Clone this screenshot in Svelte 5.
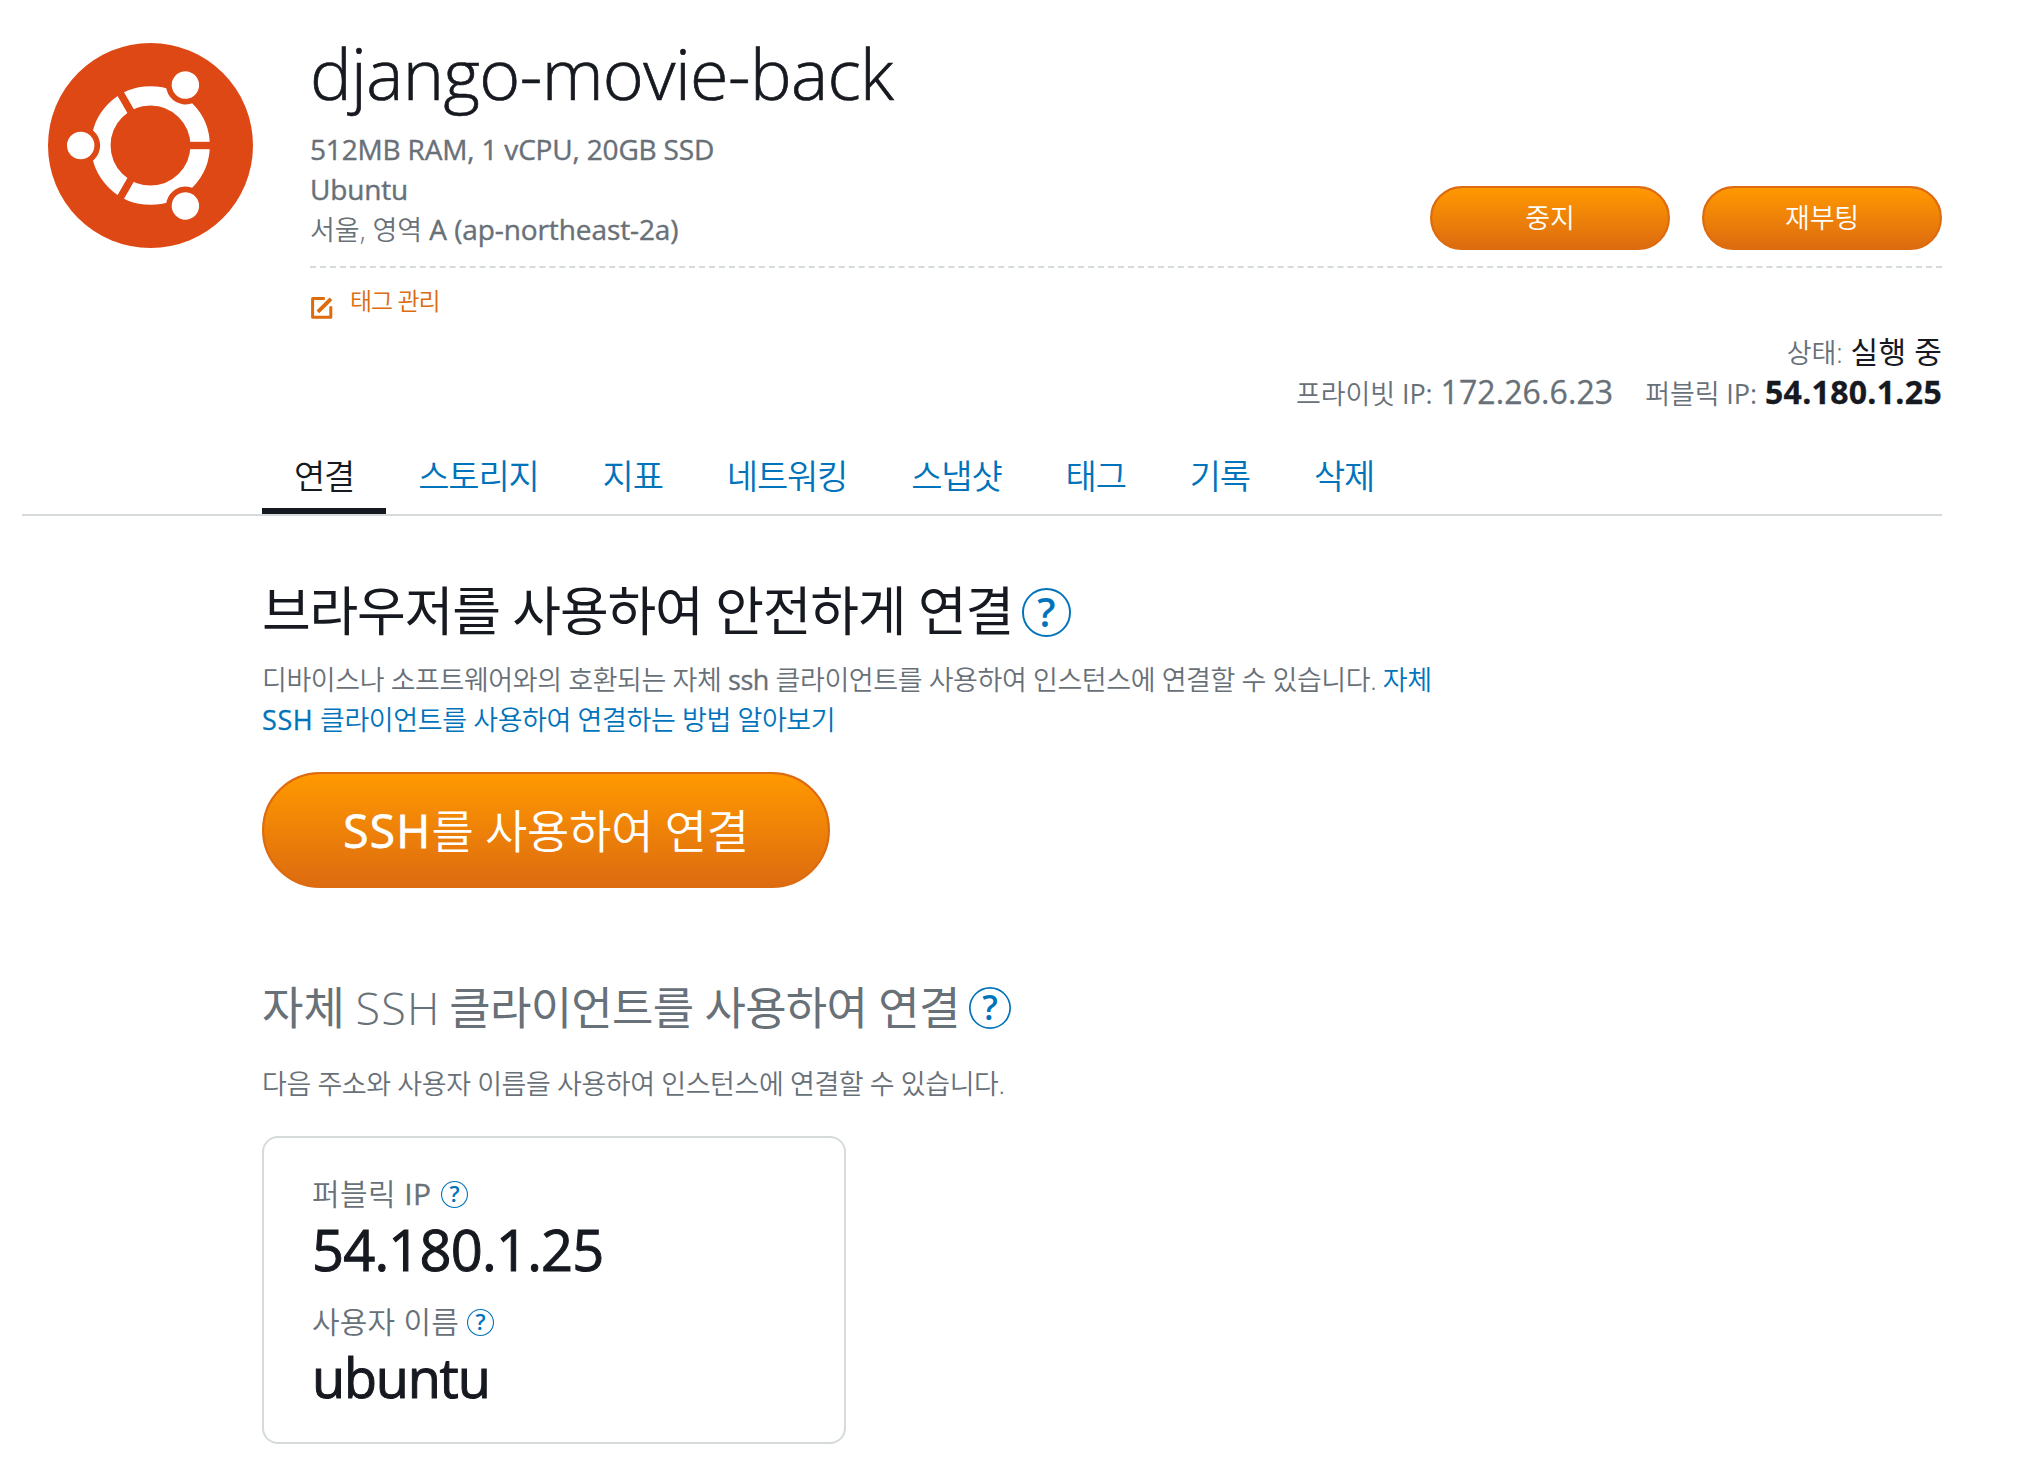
<script>
  const tabs = ['연결', '스토리지', '지표', '네트워킹', '스냅샷', '태그', '기록', '삭제'];
  const ringAngles = [0, 120, 240];
  const dotAngles = [60, 180, 300];
</script>

{#snippet help(size)}
  <svg class="help {size}" viewBox="0 0 50 50" role="img" aria-label="도움말">
    <circle class="help-ring" cx="25" cy="25" r="24" />
    <text class="help-mark" x="25" y="39.5" text-anchor="middle">?</text>
  </svg>
{/snippet}

<main class="page">
  <header class="header">
    <svg class="logo" viewBox="-102.5 -102.5 205 205" aria-hidden="true">
      <circle r="102.5" fill="#dd4814" />
      <circle r="49.6" fill="none" stroke="#fff" stroke-width="19.4" />
      {#each ringAngles as a}
        <line x1="36" x2="64" stroke="#dd4814" stroke-width="7.4" transform="rotate({a})" />
      {/each}
      {#each dotAngles as a}
        <g transform="rotate({a})">
          <circle cx="69.8" r="19.4" fill="#dd4814" />
          <circle cx="69.8" r="13.7" fill="#fff" />
        </g>
      {/each}
    </svg>

    <div class="info">
      <h1 class="name">django-movie-back</h1>
      <div class="summary">
        <div class="specs">
          <p>512MB RAM, 1 vCPU, 20GB SSD</p>
          <p>Ubuntu</p>
          <p class="zone"><span class="ko">서울, 영역</span> A (ap-northeast-2a)</p>
        </div>
        <div class="actions">
          <button class="btn">중지</button>
          <button class="btn">재부팅</button>
        </div>
      </div>
      <a class="tag-link" href="#tags">
        <svg class="edit" viewBox="0 0 22 22" aria-hidden="true">
          <path d="M13.8 1.6H1.6v18.6h18.2V9.2" fill="none" stroke="currentColor" stroke-width="3" stroke-linejoin="round" />
          <path d="M7 14.8 20 1.8" fill="none" stroke="#fff" stroke-width="7" />
          <path d="M6.9 14.9 20 1.8" fill="none" stroke="currentColor" stroke-width="3.8" />
        </svg>
        <span>태그 관리</span>
      </a>
      <div class="status">
        <div class="row">
          <span class="pair"><span class="key">상태:</span><span class="state">실행 중</span></span>
        </div>
        <div class="row">
          <span class="pair"><span class="key">프라이빗 <span class="latin">IP:</span></span><span class="ip">172.26.6.23</span></span>
          <span class="pair"><span class="key">퍼블릭 <span class="latin">IP:</span></span><span class="ip public">54.180.1.25</span></span>
        </div>
      </div>
    </div>
  </header>

  <nav class="tabs">
    {#each tabs as tab, i}
      <a class="tab" class:active={i === 0} href="#tab-{i}">{tab}</a>
    {/each}
  </nav>

  <section class="content">
    <h2 class="title">브라우저를 사용하여 안전하게 연결{@render help('lg')}</h2>
    <p class="desc">디바이스나 소프트웨어와의 호환되는 자체 <span class="latin">ssh</span> 클라이언트를 사용하여 인스턴스에 연결할 수 있습니다. <a href="#ssh">자체<br /><span class="second"><span class="latin wide">SSH</span> 클라이언트를 사용하여 연결하는 방법 알아보기</span></a></p>
    <button class="btn big"><span class="latin wider">SSH</span>를 사용하여 연결</button>

    <h3 class="subtitle"><span>자체 <span class="thin">SSH</span> <span class="tight">클라이언트를 사용하여 연결</span></span>{@render help('md')}</h3>
    <p class="desc address">다음 주소와 사용자 이름을 사용하여 인스턴스에 연결할 수 있습니다.</p>

    <dl class="card">
      <dt class="ip-label"><span>퍼블릭 <span class="latin">IP</span></span>{@render help('sm')}</dt>
      <dd>54.180.1.25</dd>
      <dt>사용자 이름{@render help('sm')}</dt>
      <dd class="user">ubuntu</dd>
    </dl>
  </section>
</main>

<style>
  :global(body) {
    margin: 0;
    background: #fff;
  }
  .page {
    box-sizing: border-box;
    width: 2040px;
    min-height: 1470px;
    font-family: 'Open Sans', 'Noto Sans CJK KR', sans-serif;
    color: #16191f;
    word-break: keep-all;
  }
  h1, h2, h3, p, dl, dd {
    margin: 0;
  }
  a {
    color: #0073bb;
    text-decoration: none;
  }
  .latin {
    font-weight: 400;
    -webkit-text-stroke: 0.3px currentColor;
  }
  .wide {
    letter-spacing: 0.6px;
  }
  .wider {
    letter-spacing: 1.3px;
    -webkit-text-stroke-width: 0.8px;
  }

  .header {
    display: flex;
    align-items: flex-start;
    padding: 31px 98px 0 48px;
  }
  .logo {
    flex: none;
    width: 205px;
    height: 205px;
    margin: 12px 57px 0 0;
  }
  .info {
    flex: 1;
  }
  .name {
    font-size: 70px;
    line-height: 84px;
    font-weight: 300;
    letter-spacing: -0.6px;
    white-space: nowrap;
    -webkit-text-stroke: 0.7px currentColor;
  }
  .summary {
    display: flex;
    justify-content: space-between;
    align-items: flex-end;
    padding: 14px 0 16px;
    border-bottom: 2px dashed #d5dbdb;
  }
  .specs {
    font-size: 28px;
    line-height: 40px;
    height: 121px;
    letter-spacing: -0.17px;
    color: #687078;
    -webkit-text-stroke: 0.4px currentColor;
  }
  .zone {
    letter-spacing: -0.1px;
  }
  .ko {
    font-size: 27px;
    line-height: 0;
    font-weight: 350;
    letter-spacing: 0;
    -webkit-text-stroke: 0;
  }
  .actions {
    display: flex;
    gap: 32px;
  }
  .btn {
    box-sizing: border-box;
    width: 240px;
    height: 64px;
    padding: 0 0 3px;
    border: 2px solid #dd6b10;
    border-radius: 32px;
    background: linear-gradient(#ff9900, #dd6b10) padding-box, #dd6b10;
    color: #fff;
    font-family: inherit;
    font-size: 27px;
    font-weight: 350;
    letter-spacing: -0.2px;
  }
  .tag-link {
    display: flex;
    align-items: flex-start;
    gap: 17px;
    margin-top: 17px;
    color: #dd6b10;
    font-size: 24px;
    line-height: 32px;
    letter-spacing: -1px;
    font-weight: 350;
  }
  .edit {
    width: 22px;
    height: 22px;
    margin: 12px 0 -2px 1px;
  }
  .status {
    margin-top: 15px;
    color: #687078;
  }
  .row {
    display: flex;
    justify-content: flex-end;
    gap: 32px;
    height: 40px;
    line-height: 40px;
  }
  .pair {
    display: flex;
    align-items: baseline;
    gap: 8px;
  }
  .key {
    font-size: 27px;
    font-weight: 350;
    letter-spacing: -0.1px;
  }
  .key .latin {
    -webkit-text-stroke-width: 0;
  }
  .state {
    color: #16191f;
    font-size: 30px;
    font-weight: 400;
    letter-spacing: 0.2px;
  }
  .ip {
    font-size: 32px;
    letter-spacing: 0.1px;
    -webkit-text-stroke: 0.3px currentColor;
  }
  .public {
    color: #16191f;
    font-weight: 700;
    letter-spacing: 0.3px;
  }

  .tabs {
    display: flex;
    margin: 44px 98px 0 22px;
    padding-left: 240px;
    border-bottom: 2px solid #d5dbdb;
  }
  .tab {
    padding: 0 32px 12px;
    border-bottom: 6px solid transparent;
    font-size: 34px;
    line-height: 40px;
    font-weight: 350;
    letter-spacing: -1.18px;
  }
  .tab.active {
    color: #16191f;
    border-color: #16191f;
  }

  .content {
    padding: 63px 0 0 262px;
  }
  .help {
    flex: none;
    margin-left: 8px;
    overflow: visible;
  }
  .help-ring {
    fill: none;
    stroke: #0073bb;
    stroke-width: 2;
  }
  .help-mark {
    fill: #0073bb;
    font-size: 41px;
    font-weight: 600;
    letter-spacing: 0;
  }
  .lg {
    width: 49px;
    height: 49px;
    margin: 2px 0 0 9px;
  }
  .md {
    width: 42px;
    height: 42px;
    margin-left: 9px;
  }
  .sm {
    width: 27px;
    height: 27px;
  }
  .title {
    display: flex;
    align-items: center;
    font-size: 53px;
    line-height: 64px;
    font-weight: 400;
    letter-spacing: -1.2px;
  }
  .desc {
    margin-top: 17px;
    color: #687078;
    font-size: 27px;
    line-height: 40px;
    font-weight: 350;
    letter-spacing: -0.42px;
    white-space: nowrap;
  }
  .second {
    letter-spacing: -0.4px;
  }
  .second .latin {
    letter-spacing: 0.6px;
  }
  .big {
    display: block;
    width: 568px;
    height: 116px;
    margin-top: 32px;
    padding: 0 0 5px;
    border-radius: 58px;
    font-size: 46px;
    letter-spacing: -0.3px;
  }
  .subtitle {
    display: flex;
    align-items: center;
    margin-top: 92px;
    color: #687078;
    font-size: 45px;
    line-height: 56px;
    font-weight: 400;
  }
  .thin {
    margin: 0 -3px 0 -1px;
    font-weight: 300;
    letter-spacing: 1.2px;
  }
  .tight {
    letter-spacing: -0.7px;
  }
  .address {
    margin-top: 28px;
  }
  .card {
    box-sizing: border-box;
    width: 584px;
    height: 308px;
    margin-top: 32px;
    padding: 36px 47px 34px 48px;
    border: 2px solid #d5dbdb;
    border-radius: 16px;
  }
  dt {
    display: flex;
    align-items: center;
    color: #687078;
    font-size: 30px;
    line-height: 40px;
    font-weight: 350;
    letter-spacing: 0.2px;
  }
  .ip-label {
    gap: 2px;
    letter-spacing: 0.4px;
  }
  dd {
    margin: 3px 0 21px;
    font-size: 56px;
    line-height: 64px;
    letter-spacing: -0.8px;
    -webkit-text-stroke: 1px currentColor;
  }
  .user {
    margin-bottom: 0;
    font-size: 54px;
    letter-spacing: -1.2px;
  }
</style>
